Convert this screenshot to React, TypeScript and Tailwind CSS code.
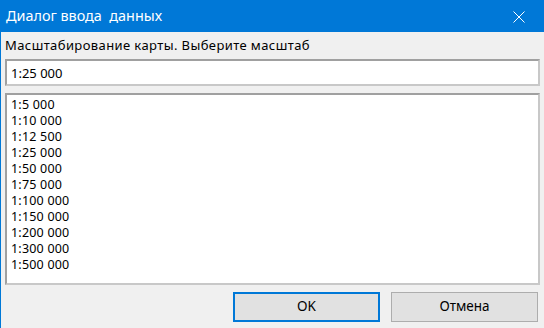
import { useState } from 'react';

const scales = [
  '1:5 000',
  '1:10 000',
  '1:12 500',
  '1:25 000',
  '1:50 000',
  '1:75 000',
  '1:100 000',
  '1:150 000',
  '1:200 000',
  '1:300 000',
  '1:500 000',
];

const App = () => {
  const [value, setValue] = useState('1:25 000');

  return (
    <div className="w-[544px] h-[328px] flex flex-col bg-[#f0f0f0] border-l border-[#0078d7] font-['Noto_Sans',sans-serif] text-[13px] text-black overflow-hidden">
      <div className="h-[32px] shrink-0 bg-[#0078d7] flex items-center justify-between pl-[5px] pr-[19px] text-white">
        <span className="text-[14.4px] whitespace-pre">Диалог ввода  данных</span>
        <svg width="12" height="12" viewBox="0 0 12 12" className="mt-[1px]">
          <path d="M0.5 0.5 L11.5 11.5 M11.5 0.5 L0.5 11.5" stroke="white" strokeWidth="1" />
        </svg>
      </div>

      <div className="flex-1 flex flex-col pl-[4px] pr-[3px]">
        <div className="h-[27px] flex items-center tracking-[0.4px]">Масштабирование карты. Выберите масштаб</div>
        <input
          value={value}
          onChange={(e) => setValue(e.target.value)}
          className="h-[27px] w-[535px] bg-white border-2 border-t-[#a0a0a0] border-l-[#a0a0a0] border-b-[#c8c8c8] border-r-[#c8c8c8] px-[4px] outline-none text-[13px]"
        />
        <div className="mt-[7px] h-[192px] w-[535px] bg-white border-2 border-t-[#a0a0a0] border-l-[#a0a0a0] border-b-[#c8c8c8] border-r-[#c8c8c8] pt-[2px] pl-[4px] text-[12.5px]">
          {scales.map((s) => (
            <div key={s} className="h-[16px] leading-[16px] tracking-[0.2px] cursor-default" onClick={() => setValue(s)}>
              {s}
            </div>
          ))}
        </div>
        <div className="flex-1 flex items-center justify-end gap-[11px] pr-[3px] text-[13.5px]">
          <button className="w-[147px] h-[30px] bg-[#e1e1e1] border-2 border-[#0078d7]">OK</button>
          <button className="w-[147px] h-[30px] bg-[#e1e1e1] border border-[#adadad]">Отмена</button>
        </div>
      </div>
    </div>
  );
};

export default App;
